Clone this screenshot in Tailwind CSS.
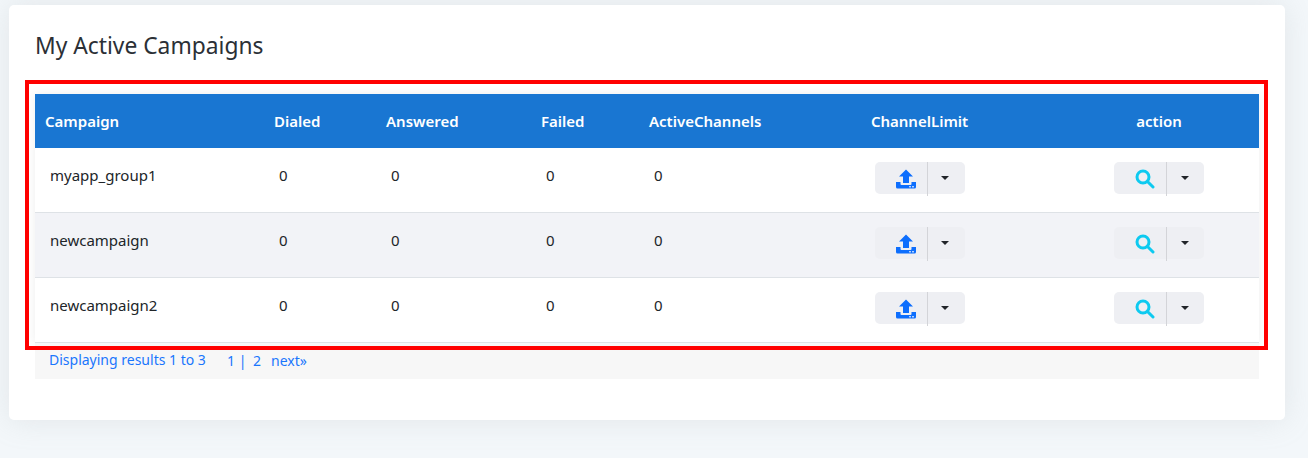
<!DOCTYPE html>
<html lang="en">
<head>
    <meta charset="UTF-8">
    <title>My Active Campaigns</title>
    <script src="https://cdn.jsdelivr.net/npm/@tailwindcss/browser@4"></script>
</head>
<body class="bg-[#f3f7fa] h-[458px] overflow-hidden font-['Noto_Sans',sans-serif] text-[#212529]">
    <div class="relative ml-[9px] mt-[5px] w-[1276px] h-[415px] bg-white rounded-[5px] shadow-[0_0_30px_rgba(165,175,175,0.22)] px-[26px] pt-[25px]">
        <h4 class="text-[22.8px] leading-[32px] h-[64px] text-[#2b3036]">My Active Campaigns</h4>

        <table class="table-fixed border-separate border-spacing-0 w-[1224px] text-[15px] shadow-[0_0_10px_rgba(0,0,0,0.07)]">
            <thead>
                <tr class="h-[54px] bg-[#1976d2] text-white text-left">
                    <th class="w-[229px] pl-[10px] font-semibold">Campaign</th>
                    <th class="w-[112px] pl-[10px] font-semibold">Dialed</th>
                    <th class="w-[155px] pl-[10px] font-semibold">Answered</th>
                    <th class="w-[108px] pl-[10px] font-semibold">Failed</th>
                    <th class="w-[141px] pl-[10px] font-semibold">ActiveChannels</th>
                    <th class="w-[279px] text-center font-semibold">ChannelLimit</th>
                    <th class="w-[200px] text-center font-semibold">action</th>
                </tr>
            </thead>
            <tbody class="bg-white">
                <tr class="h-[65px]">
                    <td class="pl-[15px] pb-[10px] border-b border-[#dee2e6]">myapp_group1</td>
                    <td class="pl-[15px] pb-[10px] border-b border-[#dee2e6]">0</td>
                    <td class="pl-[15px] pb-[10px] border-b border-[#dee2e6]">0</td>
                    <td class="pl-[15px] pb-[10px] border-b border-[#dee2e6]">0</td>
                    <td class="pl-[15px] pb-[10px] border-b border-[#dee2e6]">0</td>
                    <td class="pb-[4px] border-b border-[#dee2e6]">
                        <div class="mx-auto w-[90px] h-[32px] flex bg-[#eeeff3] rounded-[5px]">
                            <span class="w-[52px] flex items-center justify-center">
                                <svg class="w-[20px] h-[20px] ml-[10px] mt-[1px]" viewBox="0 0 20 20" fill="#0d6efd"><path d="M10 .5 17 7.500H13V14H7V7.500H3Z"/><path d="M0 13H4.500V15Q4.500 16 5.500 16H14.500Q15.500 16 15.500 15V13H20V18Q20 19.500 18.500 19.500H1.500Q0 19.500 0 18Z"/><rect x="13" y="17.300" width="2" height="1" fill="#fff"/><rect x="16" y="17.300" width="2" height="1" fill="#fff"/></svg>
                            </span>
                            <span class="w-px h-[34px] bg-[#d3d4d8]"></span>
                            <span class="flex-1 flex items-center justify-center pr-[2px]"><span class="border-x-[4px] border-x-transparent border-t-[4px] border-t-[#212529]"></span></span>
                        </div>
                    </td>
                    <td class="pb-[4px] border-b border-[#dee2e6]">
                        <div class="mx-auto w-[90px] h-[32px] flex bg-[#eeeff3] rounded-[5px]">
                            <span class="w-[52px] flex items-center justify-center">
                                <svg class="w-[20px] h-[20px] ml-[10px] mt-[1px]" viewBox="0 0 20 20" fill="none" stroke="#0dcaf0" stroke-width="3"><circle cx="8" cy="8" r="6"/><path d="M12.500 12.500 18 18" stroke-linecap="round"/></svg>
                            </span>
                            <span class="w-px h-[34px] bg-[#d3d4d8]"></span>
                            <span class="flex-1 flex items-center justify-center pr-[2px]"><span class="border-x-[4px] border-x-transparent border-t-[4px] border-t-[#212529]"></span></span>
                        </div>
                    </td>
                </tr>
                <tr class="h-[65px] bg-[#f2f3f7]">
                    <td class="pl-[15px] pb-[10px] border-b border-[#dee2e6]">newcampaign</td>
                    <td class="pl-[15px] pb-[10px] border-b border-[#dee2e6]">0</td>
                    <td class="pl-[15px] pb-[10px] border-b border-[#dee2e6]">0</td>
                    <td class="pl-[15px] pb-[10px] border-b border-[#dee2e6]">0</td>
                    <td class="pl-[15px] pb-[10px] border-b border-[#dee2e6]">0</td>
                    <td class="pb-[4px] border-b border-[#dee2e6]">
                        <div class="mx-auto w-[90px] h-[32px] flex bg-[#eeeff3] rounded-[5px]">
                            <span class="w-[52px] flex items-center justify-center">
                                <svg class="w-[20px] h-[20px] ml-[10px] mt-[1px]" viewBox="0 0 20 20" fill="#0d6efd"><path d="M10 .5 17 7.500H13V14H7V7.500H3Z"/><path d="M0 13H4.500V15Q4.500 16 5.500 16H14.500Q15.500 16 15.500 15V13H20V18Q20 19.500 18.500 19.500H1.500Q0 19.500 0 18Z"/><rect x="13" y="17.300" width="2" height="1" fill="#fff"/><rect x="16" y="17.300" width="2" height="1" fill="#fff"/></svg>
                            </span>
                            <span class="w-px h-[34px] bg-[#d3d4d8]"></span>
                            <span class="flex-1 flex items-center justify-center pr-[2px]"><span class="border-x-[4px] border-x-transparent border-t-[4px] border-t-[#212529]"></span></span>
                        </div>
                    </td>
                    <td class="pb-[4px] border-b border-[#dee2e6]">
                        <div class="mx-auto w-[90px] h-[32px] flex bg-[#eeeff3] rounded-[5px]">
                            <span class="w-[52px] flex items-center justify-center">
                                <svg class="w-[20px] h-[20px] ml-[10px] mt-[1px]" viewBox="0 0 20 20" fill="none" stroke="#0dcaf0" stroke-width="3"><circle cx="8" cy="8" r="6"/><path d="M12.500 12.500 18 18" stroke-linecap="round"/></svg>
                            </span>
                            <span class="w-px h-[34px] bg-[#d3d4d8]"></span>
                            <span class="flex-1 flex items-center justify-center pr-[2px]"><span class="border-x-[4px] border-x-transparent border-t-[4px] border-t-[#212529]"></span></span>
                        </div>
                    </td>
                </tr>
                <tr class="h-[65px]">
                    <td class="pl-[15px] pb-[10px] border-b border-[#dee2e6]">newcampaign2</td>
                    <td class="pl-[15px] pb-[10px] border-b border-[#dee2e6]">0</td>
                    <td class="pl-[15px] pb-[10px] border-b border-[#dee2e6]">0</td>
                    <td class="pl-[15px] pb-[10px] border-b border-[#dee2e6]">0</td>
                    <td class="pl-[15px] pb-[10px] border-b border-[#dee2e6]">0</td>
                    <td class="pb-[4px] border-b border-[#dee2e6]">
                        <div class="mx-auto w-[90px] h-[32px] flex bg-[#eeeff3] rounded-[5px]">
                            <span class="w-[52px] flex items-center justify-center">
                                <svg class="w-[20px] h-[20px] ml-[10px] mt-[1px]" viewBox="0 0 20 20" fill="#0d6efd"><path d="M10 .5 17 7.500H13V14H7V7.500H3Z"/><path d="M0 13H4.500V15Q4.500 16 5.500 16H14.500Q15.500 16 15.500 15V13H20V18Q20 19.500 18.500 19.500H1.500Q0 19.500 0 18Z"/><rect x="13" y="17.300" width="2" height="1" fill="#fff"/><rect x="16" y="17.300" width="2" height="1" fill="#fff"/></svg>
                            </span>
                            <span class="w-px h-[34px] bg-[#d3d4d8]"></span>
                            <span class="flex-1 flex items-center justify-center pr-[2px]"><span class="border-x-[4px] border-x-transparent border-t-[4px] border-t-[#212529]"></span></span>
                        </div>
                    </td>
                    <td class="pb-[4px] border-b border-[#dee2e6]">
                        <div class="mx-auto w-[90px] h-[32px] flex bg-[#eeeff3] rounded-[5px]">
                            <span class="w-[52px] flex items-center justify-center">
                                <svg class="w-[20px] h-[20px] ml-[10px] mt-[1px]" viewBox="0 0 20 20" fill="none" stroke="#0dcaf0" stroke-width="3"><circle cx="8" cy="8" r="6"/><path d="M12.500 12.500 18 18" stroke-linecap="round"/></svg>
                            </span>
                            <span class="w-px h-[34px] bg-[#d3d4d8]"></span>
                            <span class="flex-1 flex items-center justify-center pr-[2px]"><span class="border-x-[4px] border-x-transparent border-t-[4px] border-t-[#212529]"></span></span>
                        </div>
                    </td>
                </tr>
            </tbody>
        </table>

        <div class="relative w-[1224px] h-[36px] bg-[#f7f7f7] flex items-start pl-[14px] pt-[7px] text-[14px] text-[#1a76fd] leading-[20px]">
            <span class="w-[178px]">Displaying results 1 to 3</span>
            <span class="mt-[1px] w-[26px]">1 |</span>
            <span class="mt-[1px] w-[18px]">2</span>
            <span class="mt-[1px]">next»</span>
        </div>

        <!-- red highlight drawn over the table -->
        <div class="absolute left-[16px] top-[75px] w-[1243px] h-[270px] border-[4px] border-[#ff0000]"></div>
    </div>
</body>
</html>
